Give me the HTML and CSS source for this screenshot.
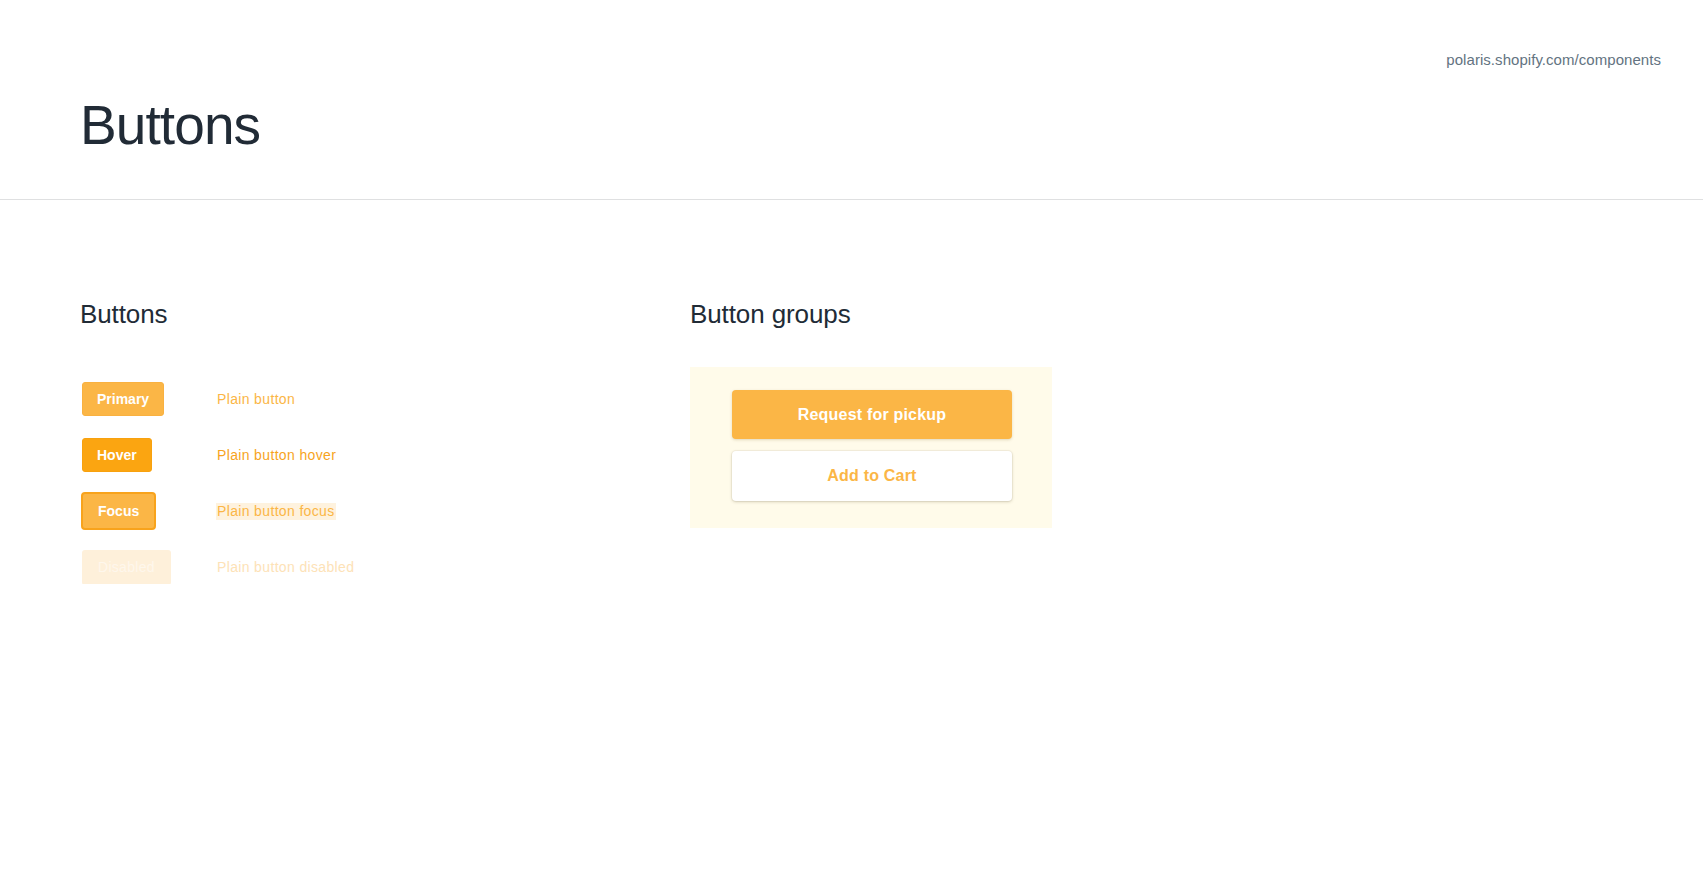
FILE: index.html
```html
<!DOCTYPE html>
<html lang="en">
<head>
<meta charset="utf-8">
<title>Buttons</title>
<link rel="stylesheet" href="styles.css">
</head>
<body>
<header class="page-header">
  <div class="source">polaris.shopify.com/components</div>
  <h1 class="page-title">Buttons</h1>
</header>
<main class="content">
  <section class="col col-buttons">
    <h2 class="section-title">Buttons</h2>
    <div class="button-grid">
      <div class="cell"><span class="btn btn-primary">Primary</span></div>
      <div class="cell"><span class="plain">Plain button</span></div>
      <div class="cell"><span class="btn btn-hover">Hover</span></div>
      <div class="cell"><span class="plain plain-hover">Plain button hover</span></div>
      <div class="cell"><span class="btn btn-focus">Focus</span></div>
      <div class="cell"><span class="plain plain-focus">Plain button focus</span></div>
      <div class="cell"><span class="btn btn-disabled">Disabled</span></div>
      <div class="cell"><span class="plain plain-disabled">Plain button disabled</span></div>
    </div>
  </section>
  <section class="col col-groups">
    <h2 class="section-title">Button groups</h2>
    <div class="group-box">
      <span class="big-btn big-primary">Request for pickup</span>
      <span class="big-btn big-secondary">Add to Cart</span>
    </div>
  </section>
</main>
</body>
</html>
```
FILE: styles.css
```css
* { box-sizing: border-box; }
html, body { margin: 0; padding: 0; background: #ffffff; }
body {
  font-family: "Liberation Sans", Arial, sans-serif;
  color: #212b36;
  -webkit-font-smoothing: antialiased;
}
.page-header {
  height: 200px;
  border-bottom: 1px solid #dfe0e1;
  padding: 50px 42px 0 80px;
  display: flex;
  flex-direction: column;
}
.source {
  align-self: flex-end;
  font-size: 15px;
  line-height: 20px;
  color: #637381;
  letter-spacing: 0.05px;
}
.page-title {
  margin: 23px 0 0 0;
  font-size: 55px;
  line-height: 64px;
  font-weight: 400;
  letter-spacing: -0.9px;
  color: #212b36;
}
.content {
  display: flex;
  padding: 98px 0 0 80px;
}
.col-buttons { width: 610px; }
.section-title {
  margin: 0;
  font-size: 26px;
  line-height: 32px;
  font-weight: 400;
  color: #212b36;
  letter-spacing: -0.1px;
}
.button-grid {
  margin-top: 52px;
  display: grid;
  grid-template-columns: 137px auto;
  grid-auto-rows: 34px;
  row-gap: 22px;
  align-items: center;
}
.cell { display: flex; align-items: center; }
.btn {
  display: inline-flex;
  align-items: center;
  justify-content: center;
  height: 34px;
  padding: 0 14px;
  margin-left: 2px;
  border-radius: 3px;
  font-size: 14px;
  font-weight: 700;
  color: #ffffff;
  letter-spacing: 0;
}
.btn-primary {
  background: #fbb646;
  border: 1px solid #f9b140;
}
.btn-hover {
  background: #fba511;
  border: 1px solid #f8a10e;
}
.btn-focus {
  margin-left: 1px;
  height: 38px;
  padding: 0 15px;
  background: #fbb646;
  border: 2px solid #f8a31c;
  border-radius: 4px;
}
.btn-disabled {
  background: #fef0da;
  color: #fef7ec;
  height: 35px;
  font-weight: 400;
  padding: 0 16px;
  letter-spacing: 0.3px;
}
.plain {
  font-size: 14px;
  line-height: 17px;
  color: #fbb646;
  letter-spacing: 0.35px;
}
.plain-hover { color: #f7a41d; }
.plain-focus { background: #fef2de; padding: 0 1px; margin-left: -1px; }
.plain-disabled { color: #fde2b7; }
.col-groups { width: 620px; }
.group-box {
  margin-top: 37px;
  width: 362px;
  background: #fffbea;
  padding: 23px 40px 27px 42px;
  display: flex;
  flex-direction: column;
  gap: 12px;
}
.big-btn {
  display: flex;
  align-items: center;
  justify-content: center;
  height: 49px;
  border-radius: 4px;
  font-size: 16px;
  font-weight: 700;
  letter-spacing: 0.2px;
}
.big-primary {
  background: #fbb646;
  color: #ffffff;
  box-shadow: 0 1px 3px rgba(120, 90, 20, 0.22);
}
.big-secondary {
  height: 50px;
  background: #ffffff;
  color: #fbb646;
  box-shadow: 0 1px 3px rgba(90, 80, 40, 0.25), 0 0 0 1px rgba(120, 110, 60, 0.06);
}
```
